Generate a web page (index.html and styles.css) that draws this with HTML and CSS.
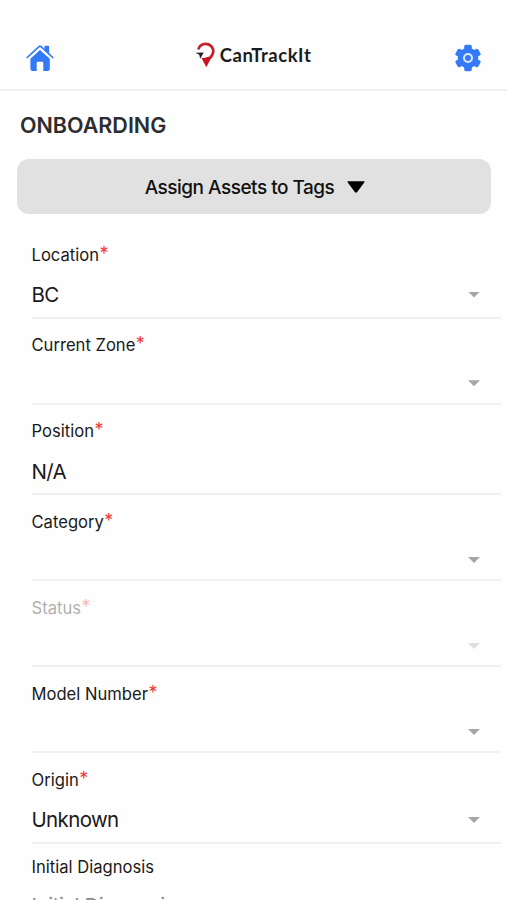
FILE: index.html
```html
<!DOCTYPE html>
<html lang="en">
<head>
<meta charset="utf-8">
<meta name="viewport" content="width=device-width, initial-scale=1">
<title>CanTrackIt</title>
<link rel="stylesheet" href="styles.css">
</head>
<body>
<header class="header">
  <svg class="home" viewBox="0 0 28 28" aria-label="Home"><path fill="#347af6" d="M18.500 2.500q0-.8.8-.8h3q.8 0 .8.8v8l-4.600-4.200zM14 5.900l9.800 8.900v10.300q0 1.800-1.800 1.800h-4.700v-8q0-1.200-1.200-1.200h-4.200q-1.200 0-1.200 1.200v8H6.200q-1.800 0-1.800-1.800V14.800z"/><path d="M1.200 13.500 13 2.600q1-.9 2 0l11.800 10.900" fill="none" stroke="#347af6" stroke-width="1.700" stroke-linecap="round"/></svg>
  <div class="brand">
    <svg class="pin" viewBox="0 0 20 26"><path d="M3.300 7.500C4.300 4 7.200 1.900 10.600 1.900c4.400 0 7.700 3.200 7.700 7.300 0 2.900-1.900 5-3.700 7.300" fill="none" stroke="#c5202b" stroke-width="2.700"/><path d="M6.300 15.500q2.200 1.100 4.500 0 2.500-1.300 5.700-.3L11.300 25.300z" fill="#c9141e"/><path d="M.5 10.700l8.300-.2-3.700 6.200-.8-3.900z" fill="#222"/></svg>
    <span class="brand-name">CanTrackIt</span>
  </div>
  <svg class="gear" viewBox="0 0 28 28" aria-label="Settings"><g fill="#347af6"><circle cx="14" cy="14" r="10.300"/><rect x="10.200" y=".8" width="7.600" height="26.400" rx="1.800"/><rect x="10.200" y=".8" width="7.600" height="26.400" rx="1.800" transform="rotate(60 14 14)"/><rect x="10.200" y=".8" width="7.600" height="26.400" rx="1.800" transform="rotate(120 14 14)"/></g><circle cx="14" cy="14" r="4" fill="#347af6" stroke="#dce9ff" stroke-width="2"/></svg>
</header>
<main>
  <h1 class="title">ONBOARDING</h1>
  <button class="assign"><span>Assign Assets to Tags</span><svg class="assign-arrow" viewBox="0 0 18 12"><path d="M1 .3h16q1.200 0 .4 1L10.200 11q-1.200 1.400-2.400 0L.6 1.300Q-.2.3 1 .3z"/></svg></button>
  <form class="form">
    <div class="field filled"><label class="label">Location<span class="req">*</span></label><div class="control"><span>BC</span><i class="arrow"></i></div></div>
    <div class="field"><label class="label">Current Zone<span class="req">*</span></label><div class="control"><i class="arrow"></i></div></div>
    <div class="field filled"><label class="label">Position<span class="req">*</span></label><div class="control"><span>N/A</span></div></div>
    <div class="field"><label class="label">Category<span class="req">*</span></label><div class="control"><i class="arrow"></i></div></div>
    <div class="field disabled"><label class="label">Status<span class="req">*</span></label><div class="control"><i class="arrow"></i></div></div>
    <div class="field"><label class="label">Model Number<span class="req">*</span></label><div class="control"><i class="arrow"></i></div></div>
    <div class="field filled"><label class="label">Origin<span class="req">*</span></label><div class="control"><span>Unknown</span><i class="arrow"></i></div></div>
    <div class="field filled optional"><label class="label">Initial Diagnosis</label><div class="control placeholder"><span>Initial Diagnosis</span></div></div>
  </form>
</main>
</body>
</html>
```
FILE: styles.css
```css
* { box-sizing: border-box; }
html, body { height: 100%; }
body {
  margin: 0;
  background: #fefefe;
  color: #1a1a1a;
  font-family: Inter, "Liberation Sans", sans-serif;
  overflow: hidden;
}
.header {
  height: 91px;
  padding: 27px 25px 0 26px;
  border-bottom: 2px solid #f1f1f1;
  display: flex;
  align-items: center;
  justify-content: space-between;
}
.home, .gear { width: 28px; height: 28px; }
.brand { display: flex; align-items: center; gap: 5px; margin: -7px 2px 0 0; }
.pin { width: 20px; height: 26px; }
.brand-name {
  font: 700 18.5px/24px Lato, sans-serif;
  letter-spacing: .55px;
  color: #1c1c1c;
}
.title {
  margin: 0;
  padding: 20px 20px 0;
  height: 68px;
  font-size: 21.5px;
  line-height: 28px;
  font-weight: 600;
  color: #2d2d2f;
}
.assign {
  display: flex;
  align-items: center;
  justify-content: center;
  gap: 13px;
  width: 474px;
  height: 55px;
  margin: 0 0 0 17px;
  padding: 2px 0 0 2px;
  border: 0;
  border-radius: 12px;
  background: #e1e1e1;
  color: #111;
  font: 500 19px/24px Inter, sans-serif;
  letter-spacing: -.5px;
}
.assign-arrow { width: 18px; height: 12px; margin-top: -1px; }
.form { margin: 14px 6px 0 31.5px; }
.field {
  height: 86px;
  padding-top: 14.5px;
  border-bottom: 2px solid #f0f0f0;
}
.filled { height: 90.7px; }
.label {
  display: flex;
  height: 24px;
  font-size: 16.6px;
  line-height: 24px;
}
.req { color: #ef3b3b; font-size: 18px; line-height: 22px; margin-left: .5px; }
.control {
  display: flex;
  align-items: center;
  height: 32px;
  margin-top: 10px;
  padding-right: 21px;
  font-size: 20.5px;
  letter-spacing: -.65px;
}
.filled .control { height: 37px; margin-top: 9.5px; }
.arrow {
  width: 12px;
  height: 6px;
  margin-left: auto;
  background: #a6a6a6;
  clip-path: polygon(0 0, 100% 0, 50% 100%);
}
.disabled .label, .disabled .arrow { opacity: .35; }
.optional { padding-top: 11px; }
.filled .placeholder { margin-top: 7.5px; color: #8b8b8b; letter-spacing: -.45px; }
```
